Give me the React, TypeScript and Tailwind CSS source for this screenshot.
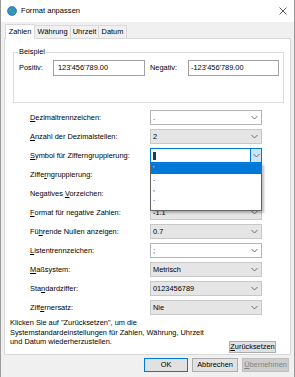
import type { ReactNode } from "react";

type Row = {
  label: ReactNode;
  value: ReactNode;
  kind: "edit" | "list" | "active";
};

const u = (s: string) => <span className="underline underline-offset-1">{s}</span>;

// rows 4 and 5 sit under the open drop list, so their values are not drawn
const rows: Row[] = [
  { label: <>{u("D")}ezimaltrennzeichen:</>, value: ".", kind: "edit" },
  { label: <>{u("A")}nzahl der Dezimalstellen:</>, value: "2", kind: "list" },
  { label: <>{u("S")}ymbol für Zifferngruppierung:</>, value: "'", kind: "active" },
  { label: <>Ziffe{u("r")}ngruppierung:</>, value: "", kind: "list" },
  { label: <>Negatives {u("V")}orzeichen:</>, value: "", kind: "edit" },
  { label: <>{u("F")}ormat für negative Zahlen:</>, value: "-1.1", kind: "list" },
  { label: <>Fü{u("h")}rende Nullen anzeigen:</>, value: "0.7", kind: "list" },
  { label: <>{u("L")}istentrennzeichen:</>, value: ";", kind: "edit" },
  { label: <>{u("M")}aßsystem:</>, value: "Metrisch", kind: "list" },
  { label: <>Sta{u("n")}dardziffer:</>, value: "0123456789", kind: "list" },
  { label: <>Ziff{u("e")}rnersatz:</>, value: "Nie", kind: "list" },
];

function Chevron() {
  return (
    <svg width="7" height="5" viewBox="0 0 7 5" className="shrink-0">
      <polyline points="0.5,1 3.5,4 6.5,1" fill="none" stroke="#606060" strokeWidth="0.9" />
    </svg>
  );
}

function Combo({ value, kind }: { value: ReactNode; kind: Row["kind"] }) {
  if (kind === "active") {
    return (
      <div className="relative w-[112px] h-[15px]">
        <div className="flex h-full items-center border border-[#0078d7] bg-white">
          <div className="flex flex-1 items-center pl-[2px]">
            <span className="h-[8px] w-[3px] bg-[#1d3a5c]" />
          </div>
          <div className="flex h-full w-[11px] items-center justify-center border-l border-[#0078d7] bg-[#cce4f7]">
            <Chevron />
          </div>
        </div>
        {/* open drop list */}
        <div className="absolute left-0 top-[15px] z-10 w-[112px] h-[48px] border border-[#646464] bg-white shadow-[2px_2px_2px_rgba(0,0,0,0.25)]">
          <div className="h-[10px] bg-[#0078d7] pl-[2px] leading-[10px] text-white">'</div>
          <div className="h-[10px] pl-[2px] leading-[10px]">.</div>
          <div className="h-[10px] pl-[2px] leading-[10px]">,</div>
          <div className="h-[10px] pl-[2px] leading-[10px]">.</div>
        </div>
      </div>
    );
  }
  return (
    <div
      className={`flex w-[112px] h-[15px] items-center border pl-[2px] pr-[3px] ${
        kind === "edit" ? "border-[#b4b4b4] bg-white" : "border-[#c8c8c8] bg-[#e5e5e5]"
      }`}
    >
      <span className="flex-1 leading-none">{value}</span>
      <Chevron />
    </div>
  );
}

export default function App() {
  return (
    <div
      className="flex h-[377px] w-[295px] flex-col border-x border-[#9a9a9a] bg-[#f0f0f0] text-[7.4px] text-black"
      style={{ fontFamily: '"Liberation Sans", Arial, sans-serif' }}
    >
      {/* title bar */}
      <div className="flex h-[22px] shrink-0 items-center bg-white pl-[6px] pr-[7px]">
        <svg width="10" height="10" viewBox="0 0 10 10" className="mr-[4px]">
          <circle cx="5" cy="5" r="4.5" fill="#2c8fd6" />
          <path d="M2 3.5 Q3.5 2 5 3 L4.5 5 L3 6 Z" fill="#4cae4c" />
          <path d="M5.5 6 L8 5 L7.5 7.8 L6 8.5 Z" fill="#4cae4c" />
          <circle cx="5" cy="5" r="4.5" fill="none" stroke="#1c5f92" strokeWidth="0.6" />
        </svg>
        <span className="text-[7.6px]">Format anpassen</span>
        <div className="flex-1" />
        <svg width="8" height="8" viewBox="0 0 8 8">
          <path d="M0.5 0.5 L7.5 7.5 M7.5 0.5 L0.5 7.5" stroke="#333" strokeWidth="0.8" />
        </svg>
      </div>

      <div className="flex flex-1 flex-col px-[3px]">
        {/* tabs */}
        <div className="flex h-[16px] items-end pl-[1px]">
          <div className="relative z-10 -mb-px flex h-[15px] w-[30px] items-center justify-center border border-b-0 border-[#d9d9d9] bg-white">
            Zahlen
          </div>
          <div className="flex h-[13px] w-[36px] items-center justify-center border border-b-0 border-l-0 border-[#d9d9d9]">
            Währung
          </div>
          <div className="flex h-[13px] w-[28px] items-center justify-center border border-b-0 border-l-0 border-[#d9d9d9]">
            Uhrzeit
          </div>
          <div className="flex h-[13px] w-[28px] items-center justify-center border border-b-0 border-l-0 border-[#d9d9d9]">
            Datum
          </div>
        </div>

        {/* panel */}
        <div className="flex h-[317px] flex-col border border-[#d9d9d9] bg-white">
          <div className="relative ml-[8px] mr-[6px] mt-[13px] h-[51px] border border-[#dcdcdc]">
            <span className="absolute -top-[6px] left-[4px] bg-white px-[1px] leading-[10px]">Beispiel</span>
            <div className="flex items-center pl-[5px] pr-[4px] pt-[7px]">
              <span className="w-[34px]">Positiv:</span>
              <div className="flex h-[16px] w-[92px] items-center border border-[#a0a0a0] pl-[4px]">123'456'789.00</div>
              <span className="ml-[5px] w-[38px]">Negativ:</span>
              <div className="flex h-[16px] flex-1 items-center border border-[#a0a0a0] pl-[2px]">-123'456'789.00</div>
            </div>
          </div>

          <div className="mt-[5px] flex flex-col">
            {rows.map((row, i) => (
              <div key={i} className="flex h-[19px] items-center">
                <span className="w-[145px] pl-[25px]">{row.label}</span>
                <Combo value={row.value} kind={row.kind} />
              </div>
            ))}
          </div>

          <div className="flex flex-1 justify-between">
            <p className="ml-[5px] mt-[1px] leading-[9.5px]">
              Klicken Sie auf "Zurücksetzen", um die
              <br />
              Systemstandardeinstellungen für Zahlen, Währung, Uhrzeit
              <br />
              und Datum wiederherzustellen.
            </p>
            <button className="mb-[1px] mr-[14px] flex h-[12px] w-[47px] items-center justify-center self-end border border-[#adadad] bg-[#e1e1e1]">
              {u("Z")}urücksetzen
            </button>
          </div>
        </div>

        {/* dialog buttons */}
        <div className="mt-[3px] flex justify-end gap-[4px] pr-[2px]">
          <button className="flex h-[14px] w-[44px] items-center justify-center border border-[#0078d7] bg-[#e1e1e1]">
            OK
          </button>
          <button className="flex h-[14px] w-[46px] items-center justify-center border border-[#adadad] bg-[#e1e1e1]">
            Abbrechen
          </button>
          <button className="flex h-[14px] w-[47px] items-center justify-center border border-[#bfbfbf] bg-[#cccccc] text-[#838383]">
            {u("Ü")}bernehmen
          </button>
        </div>
      </div>
    </div>
  );
}
